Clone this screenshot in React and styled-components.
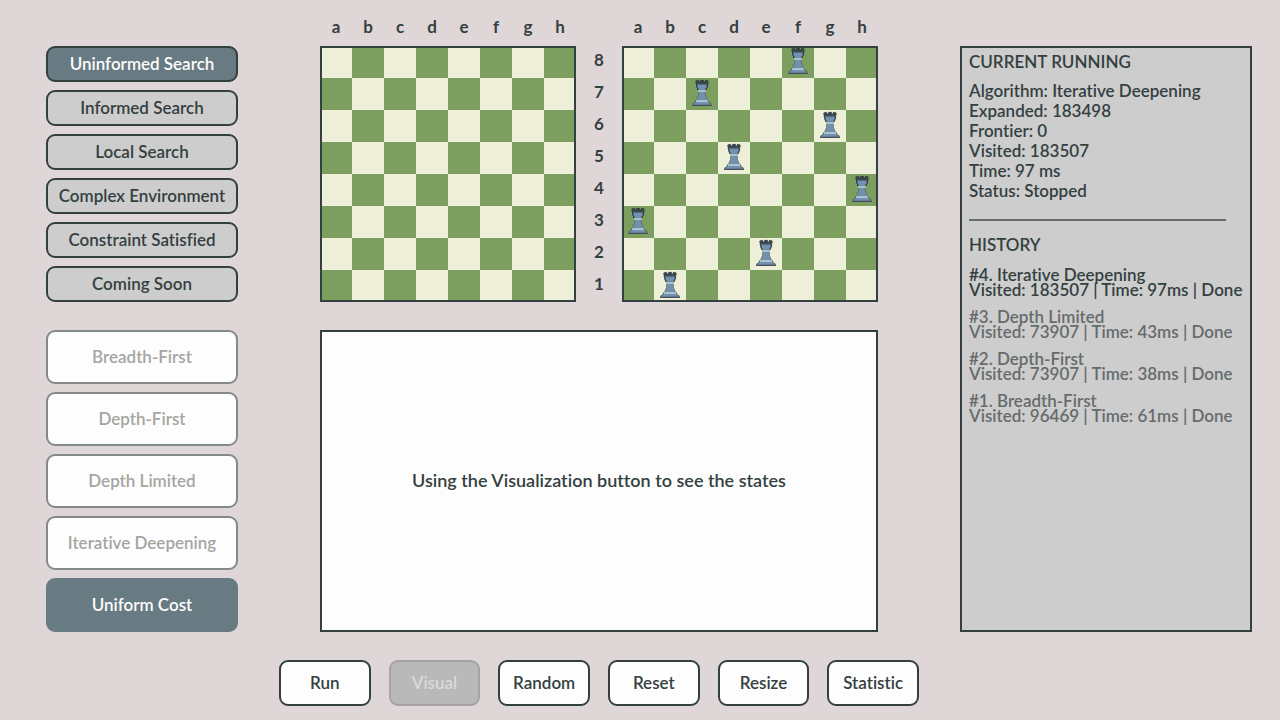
import React from "react";
import styled, { createGlobalStyle, ThemeProvider } from "styled-components";

const theme = {
  page: "#dfd6d7",
  ink: "#344040",
  slate: "#687a82",
  panel: "#cdcdcd",
  white: "#fdfdfd",
  muted: "#a5a5a1",
  mutedLine: "#848989",
  old: "#666b6b",
  light: "#eeefd9",
  dark: "#7c9e5e",
};

const GlobalStyle = createGlobalStyle`
  *, *::before, *::after { box-sizing: border-box; }
  body {
    margin: 0;
    background: ${theme.page};
    color: ${theme.ink};
    font: 600 17px/20px Lato, "Open Sans", sans-serif;
    font-variant-ligatures: none;
  }
  button { font: inherit; font-variant-ligatures: none; }
`;

const Page = styled.div`
  display: grid;
  grid-template-columns: 192px max-content 292px;
  justify-content: space-between;
  row-gap: 28px;
  padding: 18px 28px 14px 46px;
`;

const Sidebar = styled.nav`
  display: flex;
  flex-direction: column;
  gap: 28px;
  padding-top: 28px;
`;

const ButtonGroup = styled.div`
  display: flex;
  flex-direction: column;
  gap: 8px;
`;

const Button = styled.button`
  display: block;
  width: 100%;
  padding: 0;
  border: 2px solid ${(p) => p.theme.ink};
  border-radius: 9px;
  background: ${(p) => p.theme.white};
  color: inherit;
  text-align: center;
  white-space: nowrap;
`;

const CategoryButton = styled(Button)`
  height: 36px;
  background: ${(p) => (p.$active ? p.theme.slate : p.theme.panel)};
  color: ${(p) => (p.$active ? p.theme.white : p.theme.ink)};
`;

const AlgorithmButton = styled(Button)`
  height: 54px;
  border-color: ${(p) => (p.$active ? p.theme.slate : p.theme.mutedLine)};
  background: ${(p) => (p.$active ? p.theme.slate : p.theme.white)};
  color: ${(p) => (p.$active ? p.theme.white : p.theme.muted)};
`;

const Main = styled.main`
  display: flex;
  flex-direction: column;
`;

const Boards = styled.div`
  display: grid;
  grid-template-columns: 256px 46px 256px;
`;

const Files = styled.div`
  display: grid;
  grid-template-columns: repeat(8, 1fr);
  height: 28px;
  font-weight: 700;
  line-height: 18px;
  text-align: center;
`;

const Ranks = styled.div`
  display: grid;
  grid-template-rows: repeat(8, 32px);
  grid-column: 2;
  font-weight: 700;
  line-height: 28px;
  text-align: center;
`;

const Board = styled.div`
  display: grid;
  grid-template-columns: repeat(8, 32px);
  grid-template-rows: repeat(8, 32px);
  outline: 2px solid ${(p) => p.theme.ink};
  outline-offset: -2px;
`;

const Square = styled.div`
  background: ${(p) => (p.$dark ? p.theme.dark : p.theme.light)};
`;

const RookIcon = styled.svg`
  display: block;
  width: 32px;
  height: 32px;
`;

const Message = styled.section`
  display: flex;
  align-items: center;
  justify-content: center;
  height: 302px;
  margin-top: 28px;
  padding-bottom: 2px;
  border: 2px solid ${(p) => p.theme.ink};
  background: ${(p) => p.theme.white};
  font-size: 18px;
`;

const Text = styled.p`
  margin: 0;
`;

const Status = styled.aside`
  margin-top: 28px;
  padding: 4px 7px;
  border: 2px solid ${(p) => p.theme.ink};
  background: ${(p) => p.theme.panel};
`;

const Heading = styled.h2`
  margin: 0 0 9px;
  font: inherit;
`;

const Divider = styled.hr`
  width: 257px;
  margin: 18px 0 14px;
  border: 0;
  border-top: 2px solid ${(p) => p.theme.old};
`;

const History = styled.ol`
  display: flex;
  flex-direction: column;
  gap: 12px;
  margin: 0;
  padding: 3px 0 0;
  list-style: none;
  line-height: 15px;
  white-space: nowrap;
`;

const Entry = styled.li`
  color: ${(p) => (p.$latest ? p.theme.ink : p.theme.old)};
`;

const Toolbar = styled.footer`
  display: grid;
  grid-template-columns: repeat(6, 1fr);
  grid-column: 2;
  justify-self: center;
  gap: 18px;
  width: 640px;
  margin: 0 -41px;
`;

const ToolButton = styled(Button)`
  height: 46px;
  &:disabled {
    border-color: #a5a3a3;
    background: #b9b9b9;
    color: #dadada;
  }
`;

const categories = [
  "Uninformed Search",
  "Informed Search",
  "Local Search",
  "Complex Environment",
  "Constraint Satisfied",
  "Coming Soon",
];
const algorithms = [
  "Breadth-First",
  "Depth-First",
  "Depth Limited",
  "Iterative Deepening",
  "Uniform Cost",
];
const actions = ["Run", "Visual", "Random", "Reset", "Resize", "Statistic"];
const files = ["a", "b", "c", "d", "e", "f", "g", "h"];
const ranks = [8, 7, 6, 5, 4, 3, 2, 1];
const rooks = ["f8", "c7", "g6", "d5", "h4", "a3", "e2", "b1"];
const running = [
  "Algorithm: Iterative Deepening",
  "Expanded: 183498",
  "Frontier: 0",
  "Visited: 183507",
  "Time: 97 ms",
  "Status: Stopped",
];
const history = [
  ["#4. Iterative Deepening", "Visited: 183507 | Time: 97ms | Done"],
  ["#3. Depth Limited", "Visited: 73907 | Time: 43ms | Done"],
  ["#2. Depth-First", "Visited: 73907 | Time: 38ms | Done"],
  ["#1. Breadth-First", "Visited: 96469 | Time: 61ms | Done"],
];

function Rook() {
  return (
    <RookIcon viewBox="0 0 32 32" role="img" aria-label="Rook">
      <path d="M9.8 3 L12.6 2.4 L13.4 4.6 H14.6 V2.4 H17.4 V4.6 H18.6 L19.4 2.4 L22.2 3 L21.2 9.6 L19.6 12.4 H12.4 L10.8 9.6 Z" fill="#3d4a54" stroke="#262e33" strokeWidth="0.8" strokeLinejoin="round" />
      <path d="M11.2 6.6 H20.8 L20.4 9.2 L19 12 H13 L11.6 9.2 Z" fill="#7192ae" />
      <path d="M12.8 13.4 H19.2 L19.5 17.5 L21.6 22.6 H10.4 L12.5 17.5 Z" fill="#7192ae" stroke="#566a79" strokeWidth="0.8" />
      <path d="M12 13 H20" stroke="#c6d2da" strokeWidth="1.6" />
      <path d="M9.6 22.6 H22.4 L23 24.6 L25.4 26 V27.4 H6.6 V26 L9 24.6 Z" fill="#7192ae" stroke="#46545e" strokeWidth="0.8" />
      <path d="M10 23 H22" stroke="#c6d2da" strokeWidth="1.6" />
      <path d="M6.4 27.3 H25.6" stroke="#3c474f" strokeWidth="1" />
    </RookIcon>
  );
}

function ChessBoard({ label, pieces = [] }) {
  return (
    <Board role="img" aria-label={label}>
      {ranks.map((rank, r) =>
        files.map((file, f) => (
          <Square key={file + rank} $dark={(r + f) % 2 === 1}>
            {pieces.includes(file + rank) && <Rook />}
          </Square>
        ))
      )}
    </Board>
  );
}

function FileLabels() {
  return (
    <Files>
      {files.map((f) => (
        <span key={f}>{f}</span>
      ))}
    </Files>
  );
}

export default function App() {
  return (
    <ThemeProvider theme={theme}>
      <GlobalStyle />
      <Page>
        <Sidebar>
          <ButtonGroup>
            {categories.map((name, i) => (
              <CategoryButton key={name} type="button" $active={i === 0}>
                {name}
              </CategoryButton>
            ))}
          </ButtonGroup>
          <ButtonGroup>
            {algorithms.map((name) => (
              <AlgorithmButton key={name} type="button" $active={name === "Uniform Cost"}>
                {name}
              </AlgorithmButton>
            ))}
          </ButtonGroup>
        </Sidebar>
        <Main>
          <Boards>
            <FileLabels />
            <span />
            <FileLabels />
            <ChessBoard label="Start board" />
            <Ranks>
              {ranks.map((r) => (
                <span key={r}>{r}</span>
              ))}
            </Ranks>
            <ChessBoard label="Solution board" pieces={rooks} />
          </Boards>
          <Message>
            <Text>Using the Visualization button to see the states</Text>
          </Message>
        </Main>
        <Status>
          <Heading>CURRENT RUNNING</Heading>
          {running.map((line) => (
            <Text key={line}>{line}</Text>
          ))}
          <Divider />
          <Heading>HISTORY</Heading>
          <History>
            {history.map(([title, detail], i) => (
              <Entry key={title} $latest={i === 0}>
                <Text>{title}</Text>
                <Text>{detail}</Text>
              </Entry>
            ))}
          </History>
        </Status>
        <Toolbar>
          {actions.map((name) => (
            <ToolButton key={name} type="button" disabled={name === "Visual"}>
              {name}
            </ToolButton>
          ))}
        </Toolbar>
      </Page>
    </ThemeProvider>
  );
}
